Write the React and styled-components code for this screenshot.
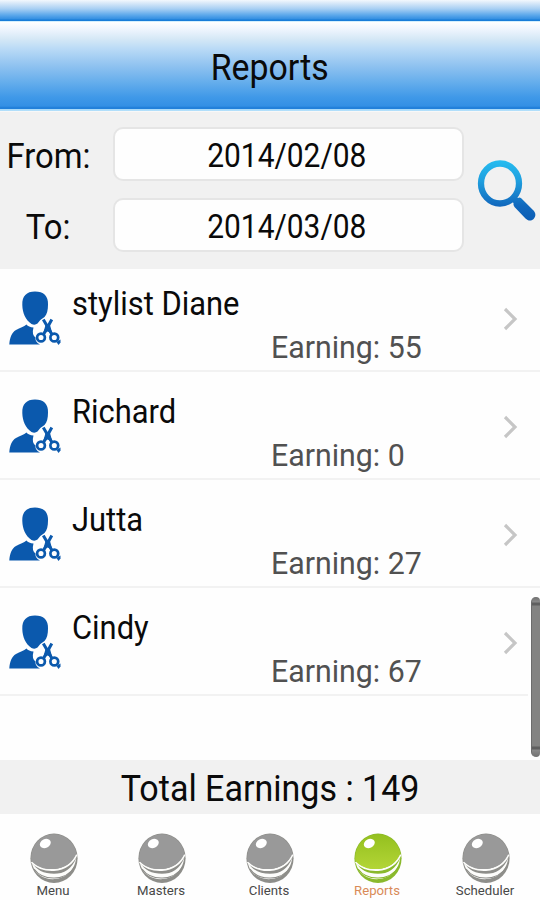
import React, {useState} from 'react';
import styled, {createGlobalStyle} from "styled-components";


const GlobalStyle = createGlobalStyle`
  * {
    box-sizing: border-box;
  }

  body {
    margin: 0;
    background: #fefefe;
    font-family: Roboto, "Liberation Sans", sans-serif;
    color: #0a0a0a;
  }
`

const Screen = styled.div`
  width: 540px;
  height: 900px;
  overflow: hidden;
  display: flex;
  flex-direction: column;
  background: #fefefe;
`

// narrows the text a little, the phone font is tighter than the desktop one
const Text = styled.span`
  display: inline-block;
  white-space: nowrap;
  font-size: ${p => p.$size}px;
  transform: scaleX(${p => p.$narrow || 1});
  transform-origin: ${p => p.$origin || 'center'};
`

const StatusStrip = styled.div`
  height: 22px;
  flex: none;
  background: linear-gradient(#f3f8fd 0, #d9e9f9 3px, #a6cef3 9px, #5da8eb 15px, #348fe2 19px, #1479d6 20px, #1c80da 21px, #d4effd 21px);
`

const Header = styled.header`
  height: 89px;
  flex: none;
  display: flex;
  align-items: center;
  justify-content: center;
  padding-top: 2px;
  background: linear-gradient(#ffffff 0, #edf4fd 8px, #d5e8f6 17px, #b9daf6 27px, #8fc2f0 44px, #66aeec 60px, #4099e8 75px, #3390e5 84px, #1d7cd8 86px, #2584dc 87px, #a5d9fa 87px, #b5e0fb 89px);
`

const Filter = styled.section`
  height: 158px;
  flex: none;
  display: flex;
  background: #f1f1f1;
  border-top: 1px solid #f8f8f8;
`

const Fields = styled.div`
  width: 464px;
  padding-top: 15px;
  display: flex;
  flex-direction: column;
  gap: 17px;
`

const Field = styled.label`
  display: grid;
  grid-template-columns: 97px 351px;
  column-gap: 16px;
  align-items: center;
  text-align: center;
  height: 54px;
`

const FieldName = styled.div`
  padding-top: 3px;
`

const DateBox = styled.div`
  height: 54px;
  line-height: 53px;
  border: 2px solid #e5e5e5;
  border-radius: 10px;
  background: #fefefe;
  padding-right: 4px;
`

const SearchButton = styled.button`
  width: 60px;
  height: 62px;
  margin: 48px 0 0 12px;
  padding: 0;
  border: 0;
  background: none;
  flex: none;
`

const ListArea = styled.main`
  position: relative;
  height: 491px;
  flex: none;
  background: #fefefe;
`

const Row = styled.div`
  height: ${p => p.$first ? 103 : 108}px;
  border-bottom: 2px solid #f2f2f2;
  display: flex;
  align-items: flex-end;
`

const AvatarCell = styled.div`
  width: 72px;
  height: 79px;
  padding-left: 9px;
  flex: none;
`

const Info = styled.div`
  width: 417px;
  display: flex;
  flex-direction: column;
`

const Name = styled.div`
  height: 42px;
  line-height: 40px;
`

const Earning = styled.div`
  height: 44px;
  line-height: 42px;
  padding-left: 199px;
  color: #515151;
`

const ArrowCell = styled.div`
  width: 40px;
  height: 63px;
  padding-left: 14px;
`

const ScrollBar = styled.div`
  position: absolute;
  right: 0;
  top: 328px;
  width: 9px;
  height: 160px;
  border-radius: 5px 4px 4px 5px;
  border-left: 1px solid #6c6c6c;
  background: linear-gradient(#707070 0, #8a8a8a 5px, #5f5f5f 6px, #5f5f5f 8px, #838382 9px, #838382 149px, #5f5f5f 150px, #5f5f5f 152px, #8a8a8a 153px, #707070 160px);
  box-shadow: -3px 0 0 #fefefe;
`

const Total = styled.div`
  height: 54px;
  flex: none;
  line-height: 58px;
  text-align: center;
  background: #f1f1f1;
`

const TabBar = styled.nav`
  height: 86px;
  display: grid;
  grid-template-columns: repeat(5, 1fr);
`

const Tab = styled.button`
  padding: 19px 0 0;
  border: 0;
  background: none;
  font-family: inherit;
  display: flex;
  flex-direction: column;
  align-items: center;
  color: ${p => p.$active ? '#d98b58' : '#484848'};
`

const TabLabel = styled.span`
  font-size: 13.2px;
  line-height: 14px;
  margin: 0 2px 0 0;
`

const SearchIcon = () => (
  <svg width="60" height="62" viewBox="0 0 60 62">
    <defs>
      <linearGradient id="glass" gradientUnits="userSpaceOnUse" x1="0" y1="0" x2="0" y2="61">
        <stop offset="0" stopColor="#27bdf0"/>
        <stop offset=".35" stopColor="#1f9ede"/>
        <stop offset=".75" stopColor="#1168bd"/>
        <stop offset="1" stopColor="#0b5cb4"/>
      </linearGradient>
    </defs>
    <ellipse cx="24" cy="23.500" rx="19" ry="20" fill="none" stroke="url(#glass)" strokeWidth="6.300"/>
    <path
      fill="url(#glass)"
      d="M35 41L39.500 36L42 38Q43.500 36.800 45.500 38.500L57 50C60 53 60 56 58 58.500C55.500 61.500 52 61 49.500 58.500L38.500 47Q37 45 37.500 43Z"
    />
  </svg>
)

const StylistIcon = () => (
  <svg width="53" height="55" viewBox="0 0 53 55" fill="#0b59ad">
    <path d="M26 .5C34.500 .5 39.500 5 39 13.500C39 19 38 23.500 35.500 26Q31 28.500 28.500 32.500Q26 34.500 22.500 33C16.500 29 13.500 22 13.300 14C13 5 17.500 .5 26 .5Z"/>
    <path d="M.3 53.500C.8 47 2.500 41.500 7 39C11 37 15 35.500 17.500 33.500Q19.500 36 24.500 36.500Q22.500 43.500 26.500 46.500Q26 51 31 53.500Z"/>
    <g fill="none" stroke="#0b59ad">
      <circle cx="32" cy="46.500" r="3.900" strokeWidth="2.700"/>
      <circle cx="45.300" cy="46.500" r="3.900" strokeWidth="2.700"/>
      <path d="M34.500 43.500L42.800 28.500M43 43.500L34.300 28.500" strokeWidth="3"/>
    </g>
    <path d="M36.500 34L41 34L43.500 43L38.700 40.500L34 43Z"/>
    <path d="M47.500 51L51.500 48.500L51.500 51.500L49.500 54Z"/>
  </svg>
)

const Chevron = () => (
  <svg width="16" height="24" viewBox="0 0 16 24" fill="none" stroke="#c6c6c6" strokeWidth="3.200">
    <path d="M2 2L12 12L2 22"/>
  </svg>
)

const Ball = ({active}) => {
  let color = active ? 'url(#green)' : '#999999'
  let edge = active ? '#8ab92c' : '#8e8e8a'

  return (
    <svg width="48" height="51" viewBox="0 0 48 51">
      <defs>
        <linearGradient id="green" x1="0" y1="0" x2="0" y2="1">
          <stop offset="0" stopColor="#94c01f"/>
          <stop offset="1" stopColor="#b3d536"/>
        </linearGradient>
      </defs>
      <ellipse cx="24" cy="25.300" rx="23.600" ry="24.700" fill={edge}/>
      <path fill="#fdfdfb" d="M1.800 29C5 52.500 43 52.500 46.200 25C42 36 34 40.800 24 40.800C14 40.800 6 37 1.800 29Z"/>
      <path fill="none" stroke={edge} strokeWidth="1.200" d="M4 36C13 48.300 36 48.300 44.500 34"/>
      <path fill="none" stroke="#fdfdfb" strokeWidth="2" d="M1.600 29C8 35.500 15 37.500 24 37C35 36.300 43 30 46.500 21.500"/>
      <path fill={color} d="M24 1.300C11 1.300 1.200 12 1.200 25.500Q1.200 27 1.600 28.200C8 34.500 15 36.500 24 36C35 35.300 43 29 46.500 20.500C44 9.500 35.500 1.300 24 1.300Z"/>
      <ellipse cx="15.300" cy="10.500" rx="5.700" ry="4.400" fill="#fff" transform="rotate(-25 15.300 10.500)"/>
    </svg>
  )
}

const masters = [
  {id: 1, name: 'stylist Diane', earning: 55},
  {id: 2, name: 'Richard', earning: 0},
  {id: 3, name: 'Jutta', earning: 27},
  {id: 4, name: 'Cindy', earning: 67},
]

const tabs = ['Menu', 'Masters', 'Clients', 'Reports', 'Scheduler']

const App = () => {
  let [tab, setTab] = useState('Reports')
  let total = masters.reduce((sum, m) => sum + m.earning, 0)

  return (
    <Screen>
      <GlobalStyle/>
      <StatusStrip/>
      <Header>
        <Text $size={36} $narrow={0.94}>Reports</Text>
      </Header>

      <Filter>
        <Fields>
          <Field>
            <FieldName><Text $size={35.5} $narrow={0.925}>From:</Text></FieldName>
            <DateBox><Text $size={33} $narrow={0.907}>2014/02/08</Text></DateBox>
          </Field>
          <Field>
            <FieldName><Text $size={35.5} $narrow={0.925}>To:</Text></FieldName>
            <DateBox><Text $size={33} $narrow={0.907}>2014/03/08</Text></DateBox>
          </Field>
        </Fields>
        <SearchButton><SearchIcon/></SearchButton>
      </Filter>

      <ListArea>
        {masters.map((m, i) => (
          <Row key={m.id} $first={i === 0}>
            <AvatarCell><StylistIcon/></AvatarCell>
            <Info>
              <Name><Text $size={32.7} $narrow={0.945} $origin="left">{m.name}</Text></Name>
              <Earning><Text $size={32} $narrow={0.947} $origin="left">Earning: {m.earning}</Text></Earning>
            </Info>
            <ArrowCell><Chevron/></ArrowCell>
          </Row>
        ))}
        <ScrollBar/>
      </ListArea>

      <Total>
        <Text $size={36} $narrow={0.945}>Total Earnings : {total}</Text>
      </Total>

      <TabBar>
        {tabs.map(t => (
          <Tab key={t} $active={t === tab} onClick={() => setTab(t)}>
            <Ball active={t === tab}/>
            <TabLabel>{t}</TabLabel>
          </Tab>
        ))}
      </TabBar>
    </Screen>
  );
};

export default App;
